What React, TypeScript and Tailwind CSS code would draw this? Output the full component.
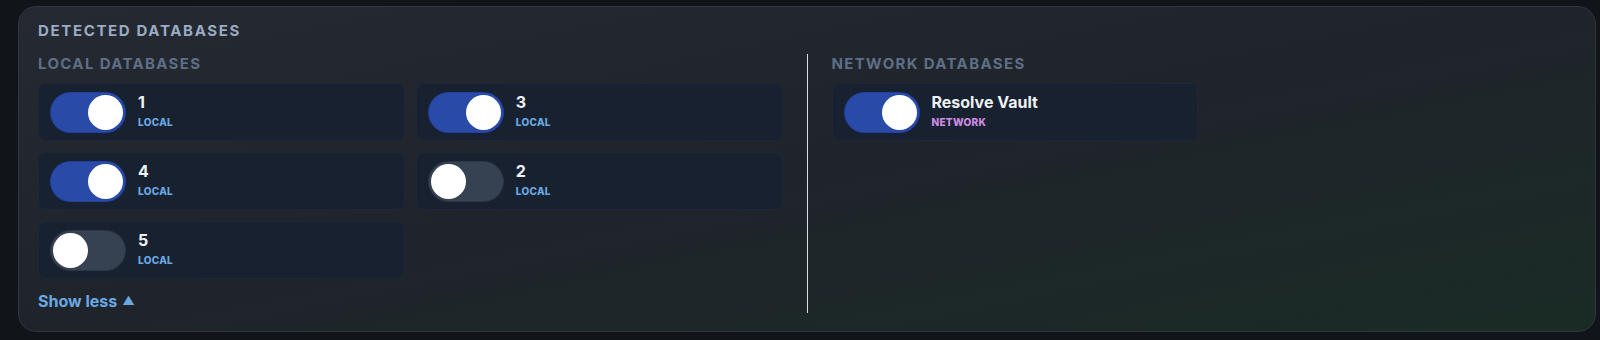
import React, { useState } from 'react';

type Db = { name: string; kind: 'LOCAL' | 'NETWORK'; on: boolean };

const localDbs: Db[] = [
  { name: '1', kind: 'LOCAL', on: true },
  { name: '3', kind: 'LOCAL', on: true },
  { name: '4', kind: 'LOCAL', on: true },
  { name: '2', kind: 'LOCAL', on: false },
  { name: '5', kind: 'LOCAL', on: false },
];

const networkDbs: Db[] = [{ name: 'Resolve Vault', kind: 'NETWORK', on: true }];

function Toggle({ on, onClick }: { on: boolean; onClick: () => void }) {
  return (
    <button
      onClick={onClick}
      className={
        'flex h-[39px] w-[74px] shrink-0 items-center rounded-full p-[2px] ' +
        (on ? 'justify-end bg-[#2a4aa8] ring-1 ring-[#2141a0]' : 'justify-start bg-[#364152] ring-1 ring-[#2c3645]')
      }
    >
      <span className="h-[35px] w-[35px] rounded-full bg-white" />
    </button>
  );
}

function DbCard({ db }: { db: Db }) {
  const [on, setOn] = useState(db.on);
  return (
    <div className="flex h-[58px] items-center gap-[13px] rounded-lg border border-[#1c2839] bg-[#18212f] px-[12px]">
      <Toggle on={on} onClick={() => setOn(!on)} />
      <div className="-mt-[4px] flex flex-col">
        <span className="mb-[3px] text-[16px] font-bold leading-[20px] text-[#eef2f6]">{db.name}</span>
        <span
          className={
            'text-[10px] font-extrabold leading-[14px] tracking-[0.03em] ' +
            (db.kind === 'LOCAL' ? 'text-[#6aa8e4]' : 'text-[#cf8de6]')
          }
        >
          {db.kind}
        </span>
      </div>
    </div>
  );
}

export default function App() {
  const [expanded, setExpanded] = useState(true);
  const shown = expanded ? localDbs : localDbs.slice(0, 4);
  return (
    <div className="h-[340px] w-full bg-[#111418] pt-[6px] pl-[18px]" style={{ fontFamily: 'Inter, "Noto Sans", sans-serif' }}>
      <div className="w-[1578px] rounded-[18px] border border-[#30363f] bg-gradient-to-br from-[#252931] via-[#1f242b] to-[#1a2b25] px-[19px] pt-[14px] pb-[18px]">
        <h2 className="text-[15px] font-bold leading-[20px] tracking-[0.11em] text-[#9aabc4]">DETECTED DATABASES</h2>
        <div className="mt-[13px] flex gap-[24px]">
          <div className="w-[745px]">
            <h3 className="text-[15px] font-bold leading-[20px] tracking-[0.09em] text-[#5e6f88]">LOCAL DATABASES</h3>
            <div className="mt-[9px] grid grid-cols-2 gap-[11px]">
              {shown.map((db) => (
                <DbCard key={db.name} db={db} />
              ))}
            </div>
            <button
              onClick={() => setExpanded(!expanded)}
              className="mt-[10px] flex items-center gap-[5px] text-[16px] font-bold leading-[24px] text-[#6aa8e4]"
            >
              Show less <span className="text-[12px] leading-none">▲</span>
            </button>
          </div>
          <div className="w-px bg-[#d8dee6]" />
          <div className="w-[745px]">
            <h3 className="text-[15px] font-bold leading-[20px] tracking-[0.09em] text-[#5e6f88]">NETWORK DATABASES</h3>
            <div className="mt-[9px] grid grid-cols-2 gap-[11px]">
              {networkDbs.map((db) => (
                <DbCard key={db.name} db={db} />
              ))}
            </div>
          </div>
        </div>
      </div>
    </div>
  );
}
